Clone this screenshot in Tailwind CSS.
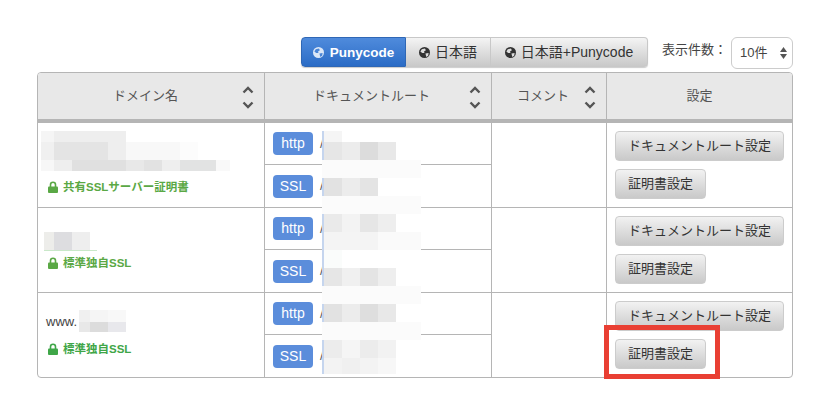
<!DOCTYPE html>
<html lang="ja"><head><meta charset="utf-8">
<script src="https://cdn.jsdelivr.net/npm/@tailwindcss/browser@4"></script>
</head>
<body class="bg-white">
<div class="relative w-[839px] h-[400px] overflow-hidden bg-white font-['Liberation_Sans','Noto_Sans_CJK_JP',sans-serif] text-[#444]">
  <svg class="hidden"><defs>
    <g id="globe"><circle cx="6" cy="6" r="6" fill="currentColor"/><path d="M3 2.5 6.5 1.5 7.5 3.5 5.5 5 6 6.5 3.5 6.5 1.5 5Z M7 7 10.5 6.5 10 9.5 8 11Z" fill="var(--g)"/></g>
    <g id="lock"><path d="M2.5 6V3.8a2.5 2.5 0 0 1 5 0V6" fill="none" stroke="currentColor" stroke-width="1.6"/><rect x="0" y="5.5" width="10" height="6.5" rx="1" fill="currentColor"/></g>
    <g id="sort"><path d="M1.5 6.5 6 2l4.500 4.500M1.500 16.500 6 21l4.500-4.500" fill="none" stroke="#555" stroke-width="2.400"/></g>
  </defs></svg>

  <div class="flex justify-end items-start pt-[37px] pr-[46px] h-[72px]">
    <div class="flex h-[30px] text-[14px] leading-[29px] rounded-[4px] shadow-[0_1px_1px_rgba(0,0,0,0.2)]">
      <div class="w-[105px] flex items-center justify-center gap-[6px] rounded-l-[4px] bg-gradient-to-b from-[#4f8bdc] to-[#2b6cc6] border border-[#2f67b5] text-white font-bold text-[13.500px]">
        <svg class="w-[11px] h-[11px] text-[#dbe7f7] [--g:#4a85d6]" viewBox="0 0 12 12"><use href="#globe"/></svg>Punycode
      </div>
      <div class="w-[85px] flex items-center justify-center gap-[5px] bg-gradient-to-b from-[#f4f4f4] to-[#c9c9c9] border-y border-r border-[#c8c8c8] text-[#333]">
        <svg class="w-[11px] h-[11px] text-[#333] [--g:#ddd]" viewBox="0 0 12 12"><use href="#globe"/></svg>日本語
      </div>
      <div class="w-[157px] flex items-center justify-center gap-[5px] rounded-r-[4px] bg-gradient-to-b from-[#f4f4f4] to-[#c9c9c9] border-y border-r border-[#c8c8c8] text-[#333]">
        <svg class="w-[11px] h-[11px] text-[#333] [--g:#ddd]" viewBox="0 0 12 12"><use href="#globe"/></svg>日本語+Punycode
      </div>
    </div>
    <div class="ml-[14px] w-[69px] text-[13px] leading-[26px] text-[#444]">表示件数：</div>
    <div class="w-[62px] h-[32px] flex items-center justify-between border border-[#ccc] rounded-[6px] pl-[8px] pr-[5px] text-[13px] text-[#444]">
      <span>10件</span>
      <span class="flex flex-col gap-[2px]">
        <svg class="w-[7px] h-[5px]" viewBox="0 0 7 5"><path d="M3.500 0 7 5H0Z" fill="#555"/></svg>
        <svg class="w-[7px] h-[5px]" viewBox="0 0 7 5"><path d="M0 0H7L3.500 5Z" fill="#555"/></svg>
      </span>
    </div>
  </div>

  <div class="ml-[37px] w-[756px] h-[306px] border border-[#b5b5b5] rounded-[4px] overflow-hidden text-[13px]">
    <div class="grid grid-cols-[227px_227px_115px_185px] h-[50px] bg-[#e8e8e8] border-b-[4px] border-[#b5b5b5] text-[#555]">
      <div class="flex items-center justify-between border-r border-[#b5b5b5] pl-[75px] pr-[10px]"><span>ドメイン名</span><svg class="w-[12px] h-[23px] mt-[2px]" viewBox="0 0 12 23"><use href="#sort"/></svg></div>
      <div class="flex items-center justify-between border-r border-[#b5b5b5] pl-[48px] pr-[10px]"><span>ドキュメントルート</span><svg class="w-[12px] h-[23px] mt-[2px]" viewBox="0 0 12 23"><use href="#sort"/></svg></div>
      <div class="flex items-center justify-between border-r border-[#b5b5b5] pl-[25px] pr-[10px]"><span>コメント</span><svg class="w-[12px] h-[23px] mt-[2px]" viewBox="0 0 12 23"><use href="#sort"/></svg></div>
      <div class="flex items-center justify-center"><span>設定</span></div>
    </div>

    <div class="grid grid-cols-[227px_227px_115px_185px] h-[85px] border-b border-[#b5b5b5]">
      <div class="border-r border-[#b5b5b5] pl-[10px] pt-[56px]">
        <div class="flex items-center gap-[5px] text-[11.500px] leading-[16px] font-bold text-[#5aa845]"><svg class="w-[10px] h-[12px]" viewBox="0 0 10 12"><use href="#lock"/></svg>共有SSLサーバー証明書</div>
      </div>
      <div class="border-r border-[#b5b5b5] flex flex-col">
        <div class="h-[42px] border-b border-[#b5b5b5] flex items-center pl-[8px] gap-[7px]"><span class="w-[40px] h-[23px] rounded-[4px] bg-[#5b8ddb] text-white text-[14px] font-light leading-[23px] text-center">http</span><span class="text-[#555]">/</span></div>
        <div class="h-[42px] flex items-center pl-[8px] gap-[7px]"><span class="w-[40px] h-[23px] rounded-[4px] bg-[#5b8ddb] text-white text-[14px] font-light leading-[23px] text-center">SSL</span><span class="text-[#555]">/</span></div>
      </div>
      <div class="border-r border-[#b5b5b5]"></div>
      <div class="flex flex-col items-start gap-[8px] pt-[8px] pl-[8px]">
        <div class="w-[169px] h-[30px] rounded-[4px] border border-[#ccc] bg-gradient-to-b from-[#f2f2f2] to-[#c9c9c9] text-center leading-[27px] text-[#333]">ドキュメントルート設定</div>
        <div class="w-[91px] h-[30px] rounded-[4px] border border-[#ccc] bg-gradient-to-b from-[#f2f2f2] to-[#c9c9c9] text-center leading-[27px] text-[#333]">証明書設定</div>
      </div>
    </div>

    <div class="grid grid-cols-[227px_227px_115px_185px] h-[85px] border-b border-[#b5b5b5]">
      <div class="border-r border-[#b5b5b5] pl-[10px] pt-[47px]">
        <div class="flex items-center gap-[5px] text-[11.500px] leading-[16px] font-bold text-[#5aa845]"><svg class="w-[10px] h-[12px]" viewBox="0 0 10 12"><use href="#lock"/></svg>標準独自SSL</div>
      </div>
      <div class="border-r border-[#b5b5b5] flex flex-col">
        <div class="h-[42px] border-b border-[#b5b5b5] flex items-center pl-[8px] gap-[7px]"><span class="w-[40px] h-[23px] rounded-[4px] bg-[#5b8ddb] text-white text-[14px] font-light leading-[23px] text-center">http</span><span class="text-[#555]">/</span></div>
        <div class="h-[42px] flex items-center pl-[8px] gap-[7px]"><span class="w-[40px] h-[23px] rounded-[4px] bg-[#5b8ddb] text-white text-[14px] font-light leading-[23px] text-center">SSL</span><span class="text-[#555]">/</span></div>
      </div>
      <div class="border-r border-[#b5b5b5]"></div>
      <div class="flex flex-col items-start gap-[8px] pt-[8px] pl-[8px]">
        <div class="w-[169px] h-[30px] rounded-[4px] border border-[#ccc] bg-gradient-to-b from-[#f2f2f2] to-[#c9c9c9] text-center leading-[27px] text-[#333]">ドキュメントルート設定</div>
        <div class="w-[91px] h-[30px] rounded-[4px] border border-[#ccc] bg-gradient-to-b from-[#f2f2f2] to-[#c9c9c9] text-center leading-[27px] text-[#333]">証明書設定</div>
      </div>
    </div>

    <div class="grid grid-cols-[227px_227px_115px_185px] h-[85px]">
      <div class="border-r border-[#b5b5b5] pl-[8px] pt-[20px]">
        <div class="text-[13px] leading-[18px] text-[#444]">www.</div>
        <div class="flex items-center gap-[5px] mt-[10px] ml-[2px] text-[11.500px] leading-[16px] font-bold text-[#3fa648]"><svg class="w-[10px] h-[12px]" viewBox="0 0 10 12"><use href="#lock"/></svg>標準独自SSL</div>
      </div>
      <div class="border-r border-[#b5b5b5] flex flex-col">
        <div class="h-[42px] border-b border-[#b5b5b5] flex items-center pl-[8px] gap-[7px]"><span class="w-[40px] h-[23px] rounded-[4px] bg-[#5b8ddb] text-white text-[14px] font-light leading-[23px] text-center">http</span><span class="text-[#555]">/</span></div>
        <div class="h-[42px] flex items-center pl-[8px] gap-[7px]"><span class="w-[40px] h-[23px] rounded-[4px] bg-[#5b8ddb] text-white text-[14px] font-light leading-[23px] text-center">SSL</span><span class="text-[#555]">/</span></div>
      </div>
      <div class="border-r border-[#b5b5b5]"></div>
      <div class="flex flex-col items-start gap-[8px] pt-[8px] pl-[8px]">
        <div class="w-[169px] h-[30px] rounded-[4px] border border-[#ccc] bg-gradient-to-b from-[#f2f2f2] to-[#c9c9c9] text-center leading-[27px] text-[#333]">ドキュメントルート設定</div>
        <div class="w-[91px] h-[30px] rounded-[4px] border border-[#ccc] bg-gradient-to-b from-[#f2f2f2] to-[#c9c9c9] text-center leading-[27px] text-[#333]">証明書設定</div>
      </div>
    </div>
  </div>

  <!-- mosaic: domain names -->
  <div class="absolute left-[41px] top-[131px] w-[13px] h-[11px] bg-[#f5f5f5]"></div>
  <div class="absolute left-[54px] top-[131px] w-[72px] h-[11px] bg-[#eeeeee]"></div>
  <div class="absolute left-[41px] top-[142px] w-[13px] h-[18px] bg-[#f0f0f0]"></div>
  <div class="absolute left-[54px] top-[142px] w-[54px] h-[18px] bg-[#e4e4e4]"></div>
  <div class="absolute left-[108px] top-[142px] w-[18px] h-[18px] bg-[#eeeeee]"></div>
  <div class="absolute left-[126px] top-[142px] w-[54px] h-[18px] bg-[#f8f8f8]"></div>
  <div class="absolute left-[180px] top-[142px] w-[18px] h-[18px] bg-[#fcfcfc]"></div>
  <div class="absolute left-[41px] top-[160px] w-[13px] h-[11px] bg-[#f7f7f7]"></div>
  <div class="absolute left-[54px] top-[160px] w-[18px] h-[11px] bg-[#eeeeee]"></div>
  <div class="absolute left-[72px] top-[160px] w-[54px] h-[11px] bg-[#e0e0e0]"></div>
  <div class="absolute left-[126px] top-[160px] w-[18px] h-[11px] bg-[#e8e8e8]"></div>
  <div class="absolute left-[144px] top-[160px] w-[18px] h-[11px] bg-[#e2e2e2]"></div>
  <div class="absolute left-[162px] top-[160px] w-[18px] h-[11px] bg-[#eeeeee]"></div>
  <div class="absolute left-[180px] top-[160px] w-[36px] h-[11px] bg-[#e2e3e3]"></div>
  <div class="absolute left-[216px] top-[160px] w-[14px] h-[11px] bg-[#f9f9f9]"></div>

  <div class="absolute left-[44px] top-[232px] w-[10px] h-[18px] bg-[#ededea]"></div>
  <div class="absolute left-[54px] top-[232px] w-[18px] h-[18px] bg-[#dddde0]"></div>
  <div class="absolute left-[72px] top-[232px] w-[18px] h-[18px] bg-[#eeeeee]"></div>
  <div class="absolute left-[44px] top-[250px] w-[53px] h-[1px] bg-[#c9e8c9]"></div>

  <div class="absolute left-[79px] top-[310px] w-[11px] h-[12px] bg-[#f0f0f0]"></div>
  <div class="absolute left-[90px] top-[310px] w-[18px] h-[12px] bg-[#f5f5f5]"></div>
  <div class="absolute left-[108px] top-[310px] w-[18px] h-[12px] bg-[#f8f8f8]"></div>
  <div class="absolute left-[79px] top-[322px] w-[11px] h-[10px] bg-[#e8e8e8]"></div>
  <div class="absolute left-[90px] top-[322px] w-[18px] h-[10px] bg-[#dcdcdc]"></div>
  <div class="absolute left-[108px] top-[322px] w-[18px] h-[10px] bg-[#e8e8ec]"></div>

  <!-- mosaic: document roots -->
  <div class="absolute left-[322px] top-[131px] w-[2px] h-[243px] bg-[#c5d5ee]"></div>
  <div class="absolute left-[324px] top-[131px] w-[18px] h-[11px] bg-[#f5f5f5]"></div>
  <div class="absolute left-[324px] top-[142px] w-[18px] h-[18px] bg-[#e6e6e6]"></div>
  <div class="absolute left-[342px] top-[142px] w-[18px] h-[18px] bg-[#ececec]"></div>
  <div class="absolute left-[360px] top-[142px] w-[18px] h-[18px] bg-[#dcdcdc]"></div>
  <div class="absolute left-[378px] top-[142px] w-[18px] h-[18px] bg-[#e8e8e8]"></div>
  <div class="absolute left-[322px] top-[160px] w-[99px] h-[18px] bg-[#fbfbfb]"></div>
  <div class="absolute left-[324px] top-[178px] w-[18px] h-[18px] bg-[#e2e2e2]"></div>
  <div class="absolute left-[342px] top-[178px] w-[18px] h-[18px] bg-[#ececec]"></div>
  <div class="absolute left-[360px] top-[178px] w-[18px] h-[18px] bg-[#e4e4e4]"></div>
  <div class="absolute left-[322px] top-[196px] w-[99px] h-[18px] bg-[#fbfbfb]"></div>
  <div class="absolute left-[324px] top-[214px] w-[18px] h-[18px] bg-[#eaeaea]"></div>
  <div class="absolute left-[342px] top-[214px] w-[18px] h-[18px] bg-[#f3f3f3]"></div>
  <div class="absolute left-[360px] top-[214px] w-[18px] h-[18px] bg-[#e6e6e6]"></div>
  <div class="absolute left-[378px] top-[214px] w-[18px] h-[18px] bg-[#eeeeee]"></div>
  <div class="absolute left-[324px] top-[232px] w-[54px] h-[18px] bg-[#f4f4f4]"></div>
  <div class="absolute left-[378px] top-[232px] w-[43px] h-[18px] bg-[#fafafa]"></div>
  <div class="absolute left-[324px] top-[250px] w-[18px] h-[18px] bg-[#fafcfb]"></div>
  <div class="absolute left-[324px] top-[268px] w-[18px] h-[18px] bg-[#e6e6e6]"></div>
  <div class="absolute left-[342px] top-[268px] w-[18px] h-[18px] bg-[#f0f0f0]"></div>
  <div class="absolute left-[360px] top-[268px] w-[18px] h-[18px] bg-[#e4e4e4]"></div>
  <div class="absolute left-[378px] top-[268px] w-[18px] h-[18px] bg-[#eeeeee]"></div>
  <div class="absolute left-[322px] top-[286px] w-[99px] h-[18px] bg-[#fbfbfb]"></div>
  <div class="absolute left-[324px] top-[304px] w-[18px] h-[18px] bg-[#e2e2e2]"></div>
  <div class="absolute left-[342px] top-[304px] w-[18px] h-[18px] bg-[#ececec]"></div>
  <div class="absolute left-[360px] top-[304px] w-[18px] h-[18px] bg-[#dedede]"></div>
  <div class="absolute left-[378px] top-[304px] w-[18px] h-[18px] bg-[#e8e8e8]"></div>
  <div class="absolute left-[322px] top-[322px] w-[99px] h-[18px] bg-[#fbfbfb]"></div>
  <div class="absolute left-[324px] top-[340px] w-[18px] h-[18px] bg-[#ececec]"></div>
  <div class="absolute left-[342px] top-[340px] w-[18px] h-[18px] bg-[#f5f5f5]"></div>
  <div class="absolute left-[360px] top-[340px] w-[18px] h-[18px] bg-[#ececec]"></div>
  <div class="absolute left-[378px] top-[340px] w-[18px] h-[18px] bg-[#f2f2f2]"></div>
  <div class="absolute left-[324px] top-[358px] w-[18px] h-[16px] bg-[#f3f3f3]"></div>
  <div class="absolute left-[342px] top-[358px] w-[18px] h-[16px] bg-[#f0f0f0]"></div>
  <div class="absolute left-[360px] top-[358px] w-[18px] h-[16px] bg-[#f3f3f3]"></div>
  <div class="absolute left-[378px] top-[358px] w-[18px] h-[16px] bg-[#f7f7f7]"></div>

  <!-- highlight annotation -->
  <div class="absolute left-[604px] top-[325px] w-[116px] h-[54px] border-[5px] border-[#e93f33]"></div>
</div>
</body></html>
